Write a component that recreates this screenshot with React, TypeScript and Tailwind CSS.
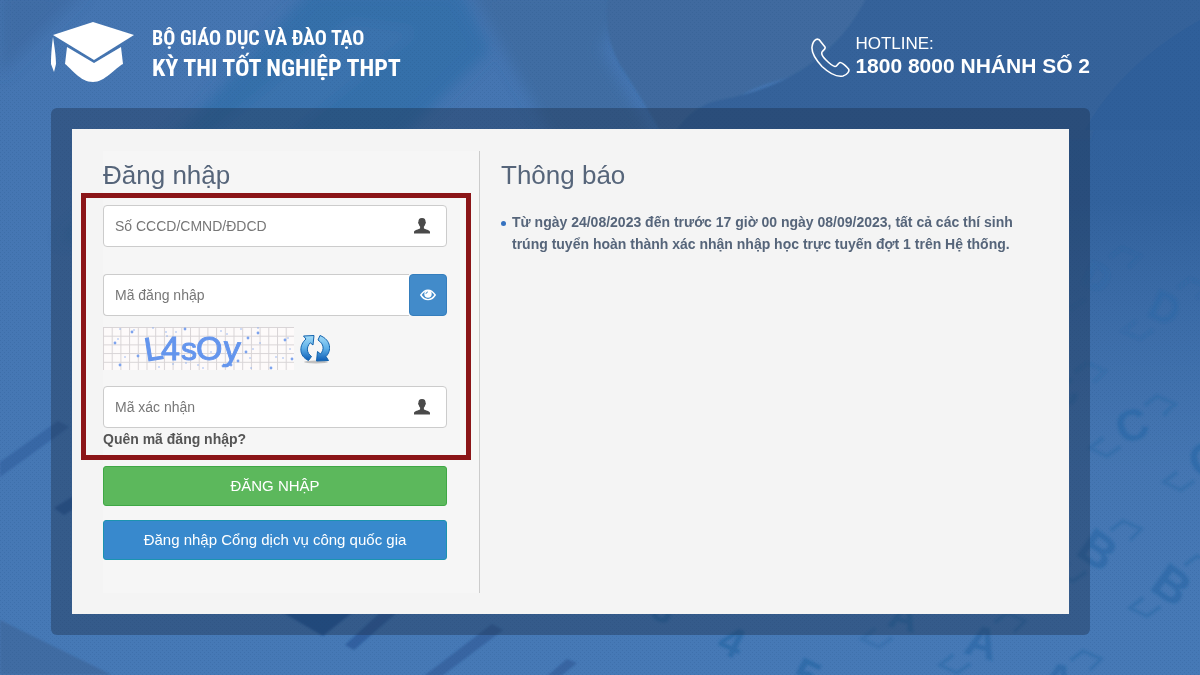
import React from "react"

interface AnswerMark {
  letter: string;
  x: number;
  y: number;
  size: number;
  turn: number;
  opacity: number;
}

interface TextFieldProps {
  id: string;
  placeholder: string;
}

// Answer sheet bubbles scattered over the backdrop
const answerMarks: AnswerMark[] = [
  { letter: "D", x: 1165, y: 308, size: 42, turn: 25, opacity: 0.4 },
  { letter: "D", x: 1097, y: 277, size: 38, turn: 25, opacity: 0.3 },
  { letter: "C", x: 1132, y: 425, size: 44, turn: -20, opacity: 0.7 },
  { letter: "C", x: 1206, y: 459, size: 46, turn: -20, opacity: 0.7 },
  { letter: "C", x: 1062, y: 392, size: 42, turn: -20, opacity: 0.5 },
  { letter: "B", x: 1098, y: 550, size: 48, turn: 35, opacity: 0.75 },
  { letter: "B", x: 1172, y: 585, size: 48, turn: 35, opacity: 0.75 },
  { letter: "A", x: 982, y: 642, size: 44, turn: 15, opacity: 0.75 },
  { letter: "A", x: 1058, y: 680, size: 46, turn: 15, opacity: 0.75 },
  { letter: "A", x: 904, y: 616, size: 40, turn: 15, opacity: 0.6 },
]

const captchaDots = [
  [17, 2, 1], [29, 5, 2], [50, 1, 1], [63, 5, 1], [82, 2, 2], [31, 3, 1], [12, 16, 2], [15, 12, 1], [35, 29, 2],
  [22, 30, 1], [17, 38, 2], [56, 40, 1], [83, 36, 1], [100, 41, 1], [108, 25, 1], [118, 4, 1], [124, 7, 1],
  [138, 2, 1], [145, 11, 2], [155, 6, 2], [157, 16, 1], [150, 22, 1], [128, 38, 2], [135, 34, 2], [148, 41, 1],
  [147, 31, 1], [168, 41, 2], [173, 30, 1], [182, 13, 2], [187, 22, 1], [189, 32, 2], [180, 31, 1], [155, 1, 1],
  [73, 5, 1], [70, 37, 1], [120, 39, 2], [95, 38, 1], [143, 25, 2], [185, 11, 1], [64, 9, 1],
]

function Backdrop() {
  return (
    <svg
      className="absolute inset-0 h-full w-full"
      viewBox="0 0 1200 675"
      preserveAspectRatio="xMidYMid slice"
      aria-hidden="true"
    >
      <defs>
        <linearGradient id="base" x1="0" y1="0" x2="0" y2="1">
          <stop offset="0" stopColor="#4575b1" />
          <stop offset="1" stopColor="#4679b6" />
        </linearGradient>
        <linearGradient id="rightShade" x1="0" y1="0" x2="0" y2="1">
          <stop offset="0" stopColor="#2f5f9a" />
          <stop offset="0.3" stopColor="#32629d" />
          <stop offset="0.7" stopColor="#4475b1" stopOpacity="0.6" />
          <stop offset="1" stopColor="#4679b6" stopOpacity="0" />
        </linearGradient>
        <filter id="soft" x="-20%" y="-20%" width="140%" height="140%">
          <feGaussianBlur stdDeviation="7" />
        </filter>
        <filter id="softer">
          <feGaussianBlur stdDeviation="1" />
        </filter>
        <pattern id="weave" width="4" height="4" patternUnits="userSpaceOnUse">
          <rect width="1" height="1" fill="#1e4a80" opacity="0.16" />
          <rect x="2" y="2" width="1" height="1" fill="#1e4a80" opacity="0.16" />
        </pattern>
      </defs>
      <rect width="1200" height="675" fill="url(#base)" />
      <rect x="840" y="0" width="360" height="675" fill="url(#rightShade)" />
      <g filter="url(#soft)">
        <path d="M0 -10H85L0 75Z" fill="#416da6" />
        <path d="M310 -10H460L490 50L300 240H60L200 110Z" fill="#3470aa" />
        <path d="M350 20L420 30L270 150L190 150Z" fill="#3f74b0" opacity="0.6" />
        <path d="M470 -10H630L600 50L660 150H560L520 80Z" fill="#416da3" />
      </g>
      <g filter="url(#softer)">
        <path d="M610 -10H890Q850 60 780 80Q720 95 700 140H665Q640 95 620 65Q600 30 610 -10Z" fill="#3f6b9f" />
        <path d="M870 -10H1210V30Q1110 70 1090 140H670Q690 105 720 100Q830 80 870 -10Z" fill="#35629a" />
      </g>
      <path d="M1200 20Q1120 65 1085 130H1200Z" fill="#2f5f9a" />
      <g filter="url(#softer)">
        <path d="M0 620L112 675H0Z" fill="#416ca3" />
        <path d="M0 462L58 421L69 427L0 477Z" fill="#3867a6" />
        <path d="M54 508L80 492V505L64 515Z" fill="#2f5f9e" />
        <path d="M275 608H358L323 636Z" fill="#275a9b" />
        <path d="M385 608H402L354 650L345 645Z" fill="#3060a0" />
        <path d="M492 624L503 630L442 676H424Z" fill="#3765a2" />
        <path d="M567 659L577 663L561 676H547Z" fill="#3765a2" />
      </g>
      <g fill="#2b6aa8" stroke="#2b6aa8" fontFamily="'Liberation Sans', Arial, sans-serif" fontWeight="700" filter="url(#softer)">
        {answerMarks.map((mark) => (
          <g key={`${mark.letter}-${mark.x}`} transform={`translate(${mark.x} ${mark.y})`} opacity={mark.opacity}>
            <text textAnchor="middle" dominantBaseline="central" fontSize={mark.size} stroke="none" transform={`rotate(${mark.turn})`}>{mark.letter}</text>
            <g fill="none" strokeWidth="3" opacity="0.7">
              <path d="M13 -20L25 -29L43 -21L32 -10" />
              <path d="M-29 13L-42 23L-25 31L-12 22" />
            </g>
          </g>
        ))}
        <text x="732" y="656" fontSize="42" stroke="none" opacity="0.8" transform="rotate(25 732 641)" textAnchor="middle">4</text>
        <text x="806" y="692" fontSize="46" stroke="none" opacity="0.8" transform="rotate(25 806 676)" textAnchor="middle">5</text>
        <text x="664" y="622" fontSize="40" stroke="none" opacity="0.8" transform="rotate(25 664 608)" textAnchor="middle">3</text>
      </g>
      <rect width="1200" height="675" fill="url(#weave)" />
    </svg>
  )
}

function GraduationCap() {
  return (
    <svg className="h-[60px] w-[84px] shrink-0" viewBox="0 0 84 60" fill="#fff" aria-hidden="true">
      <path d="M42 0L83 13L43 38L2 13Z" />
      <path d="M16 25L43 41L70 25L72 42C64 46 54 60 42 60C29 60 20 46 14 42Z" />
      <path d="M2 15C3 22 5 33 5 42L3 50L0 42C0 33 1 22 2 15Z" />
    </svg>
  )
}

function PhoneIcon() {
  return (
    <svg className="h-[40px] w-[40px] shrink-0" viewBox="0 0 40 40" fill="none" stroke="#fff" strokeWidth="1.6" strokeLinejoin="round" aria-hidden="true">
      <path d="M5 1.500C7 0.500 8.500 1.500 10 4L14 9C15 11 12 12 11 14C10 16 12 19 15 22C18 25 21 28 24 28.500C26 29 27 25 29 24.500C31 24 36 29 37.500 31C39 33 36 37 32 38C27 39 19 36 11 28.500C4 21 0.500 14 1 9C1.500 5 3 2.500 5 1.500Z" />
    </svg>
  )
}

function UserIcon() {
  return (
    <svg className="h-4 w-4" viewBox="0 0 16 16" fill="#4a4a4a" aria-hidden="true">
      <path d="M8 0C10.800 0 11.600 1.800 11.500 3.600C12.200 4 11.900 5.800 11.200 6.200C10.900 7.400 10.400 8 9.900 8.500V10.200C11 11.500 16 11.700 16 14V15.500H0V14C0 11.700 5 11.500 6.100 10.200V8.500C5.600 8 5.100 7.400 4.800 6.200C4.100 5.800 3.800 4 4.500 3.600C4.400 1.800 5.200 0 8 0Z" />
    </svg>
  )
}

function EyeIcon() {
  return (
    <svg className="h-[12px] w-4" viewBox="0 0 16 12" aria-hidden="true">
      <path d="M0.800 6C3 2.600 5.300 1.200 8 1.200S13 2.600 15.200 6C13 9.400 10.700 10.600 8 10.600S3 9.400 0.800 6Z" fill="none" stroke="#fff" strokeWidth="1.400" />
      <circle cx="8" cy="5" r="3.700" fill="#fff" />
      <path d="M5.900 5A2.200 2.200 0 0 1 8 2.900" fill="none" stroke="#428bca" strokeWidth="0.900" />
    </svg>
  )
}

function RefreshIcon() {
  return (
    <svg className="h-[32px] w-[30px]" viewBox="0 0 30 32" aria-hidden="true">
      <defs>
        <linearGradient id="arrow" x1="0" y1="0" x2="0" y2="1">
          <stop offset="0" stopColor="#a4dcf8" />
          <stop offset="0.5" stopColor="#5fb0e8" />
          <stop offset="1" stopColor="#0d5cb4" />
        </linearGradient>
      </defs>
      <ellipse cx="16" cy="29" rx="12" ry="1.500" fill="#8a8a8a" opacity="0.5" />
      <g fill="url(#arrow)" stroke="#1263ae" strokeWidth="1" strokeLinejoin="round">
        <path d="M3.500 3L14 2.500L13 12L10.300 9.800C6 14 6.500 20 11.500 23.500L8.500 27.500C-1.500 23 -1 12 6 6Z" />
        <path d="M20 2.500C31.500 7 31.500 18 26 23.500L28.500 27.500L16.500 28L17.500 18.500L20.500 21C24.500 16.500 24 11 18 7Z" />
      </g>
    </svg>
  )
}

function Captcha() {
  return (
    <svg className="h-[43px] w-[191px]" viewBox="0 0 191 43" role="img" aria-label="Mã xác nhận L4sOy">
      <defs>
        <pattern id="captchaGrid" width="8.700" height="8.700" patternUnits="userSpaceOnUse">
          <path d="M0.500 0V8.700M0 0.500H8.700" stroke="#d8d4d6" strokeWidth="1" fill="none" />
        </pattern>
      </defs>
      <rect width="191" height="43" fill="#fdfafa" />
      <rect width="191" height="43" fill="url(#captchaGrid)" />
      <g fill="#7da3ee">
        {captchaDots.map(([x, y, r]) => (
          <circle key={`${x}-${y}`} cx={x} cy={y} r={r * 0.7} />
        ))}
      </g>
      <g fill="#6495ed" stroke="#6495ed" strokeWidth="1" fontFamily="'Liberation Sans', Arial, sans-serif">
        <text x="43" y="34" fontSize="33" transform="rotate(-9 44 33)">L</text>
        <text x="58" y="33" fontSize="34">4</text>
        <text x="78" y="33" fontSize="32">s</text>
        <text x="93" y="33" fontSize="34">O</text>
        <text x="120" y="33" fontSize="34" transform="rotate(4 128 30)">y</text>
      </g>
    </svg>
  )
}

function TextField({ id, placeholder }: TextFieldProps) {
  return (
    <div className="flex h-[42px] items-center rounded-[4px] border border-[#ccc] bg-white pr-4">
      <label htmlFor={id} className="sr-only">{placeholder}</label>
      <input
        id={id}
        type="text"
        placeholder={placeholder}
        className="h-full min-w-0 flex-1 bg-transparent px-[11px] text-sm text-[#555] outline-none placeholder:text-[#777]"
      />
      <UserIcon />
    </div>
  )
}

export default function App() {
  return (
    <div className="relative min-h-screen overflow-hidden bg-[#4679b6] font-['Liberation_Sans',Arial,sans-serif]">
      <Backdrop />

      <div className="relative pr-[110px] pb-10 pl-[51px]">
        <header className="flex h-[108px] items-start justify-between text-white">
          <div className="flex items-start gap-[17px] pt-[22px]">
            <GraduationCap />
            <div className="font-['Roboto_Condensed','Liberation_Sans_Narrow',Roboto,sans-serif] font-bold whitespace-nowrap">
              <p className="text-[20px] leading-8">BỘ GIÁO DỤC VÀ ĐÀO TẠO</p>
              <p className="text-[24px] leading-7">KỲ THI TỐT NGHIỆP THPT</p>
            </div>
          </div>
          <div className="flex items-start gap-1 pt-[34px] whitespace-nowrap">
            <div className="pt-1">
              <PhoneIcon />
            </div>
            <div>
              <p className="text-[17px] leading-5">HOTLINE:</p>
              <p className="text-[21px] leading-6 font-bold">1800 8000 NHÁNH SỐ 2</p>
            </div>
          </div>
        </header>

        <main className="rounded-[6px] bg-[#1c2f4a]/40 p-[21px]">
          <div className="flex flex-wrap bg-[#f4f4f4] pt-[22px] pr-8 pb-[21px] pl-[31px]">
            {/* Login */}
            <section className="w-[377px] border-r border-[#ccc] bg-[#f6f6f6] pr-8 pb-[33px]">
              <h1 className="mb-[2px] pt-2 text-[26px] leading-8 text-[#56657a]">Đăng nhập</h1>
              <form>
                <div className="-mr-6 -ml-[22px] border-[5px] border-[#8b1518] pt-[7px] pr-[19px] pb-[5px] pl-[17px]">
                  <TextField id="cccd" placeholder="Số CCCD/CMND/ĐDCD" />

                  <div className="mt-[27px] flex h-[42px]">
                    <label htmlFor="code" className="sr-only">Mã đăng nhập</label>
                    <input
                      id="code"
                      type="text"
                      placeholder="Mã đăng nhập"
                      className="min-w-0 flex-1 rounded-l-[4px] border border-r-0 border-[#ccc] bg-white px-[11px] text-sm text-[#555] outline-none placeholder:text-[#777]"
                    />
                    <button type="button" aria-label="Hiện mã đăng nhập" className="flex w-[38px] items-center justify-center rounded-[4px] border border-[#357ebd] bg-[#428bca]">
                      <EyeIcon />
                    </button>
                  </div>

                  <div className="mt-[11px] mb-4 flex items-center gap-[6px]">
                    <Captcha />
                    <button type="button" aria-label="Đổi mã xác nhận">
                      <RefreshIcon />
                    </button>
                  </div>

                  <TextField id="captcha" placeholder="Mã xác nhận" />
                  <a href="#" className="block text-sm leading-[22px] font-bold text-[#555]">Quên mã đăng nhập?</a>
                </div>

                <button type="submit" className="mt-[6px] block h-10 w-full rounded-[3px] border border-[#3fa845] bg-[#5cb85c] text-[15px] text-white">
                  ĐĂNG NHẬP
                </button>
                <button type="button" className="mt-[14px] block h-10 w-full rounded-[3px] border border-[#1b93b0] bg-[#3889cd] text-[15px] text-white">
                  Đăng nhập Cổng dịch vụ công quốc gia
                </button>
              </form>
            </section>

            {/* Announcements */}
            <section className="min-w-[300px] flex-1 pl-[21px]">
              <h2 className="mb-5 pt-2 text-[26px] leading-8 text-[#56657a]">Thông báo</h2>
              <ul>
                <li className="flex gap-[6px] text-sm leading-[22px] font-bold text-[#56657a]">
                  <span className="mt-[10px] h-[5px] w-[5px] shrink-0 rounded-full bg-[#3572c0]"></span>
                  <span className="max-w-[512px]">
                    Từ ngày 24/08/2023 đến trước 17 giờ 00 ngày 08/09/2023, tất cả các thí sinh trúng tuyển hoàn thành xác nhận nhập học trực tuyến đợt 1 trên Hệ thống.
                  </span>
                </li>
              </ul>
            </section>
          </div>
        </main>
      </div>
    </div>
  )
}
